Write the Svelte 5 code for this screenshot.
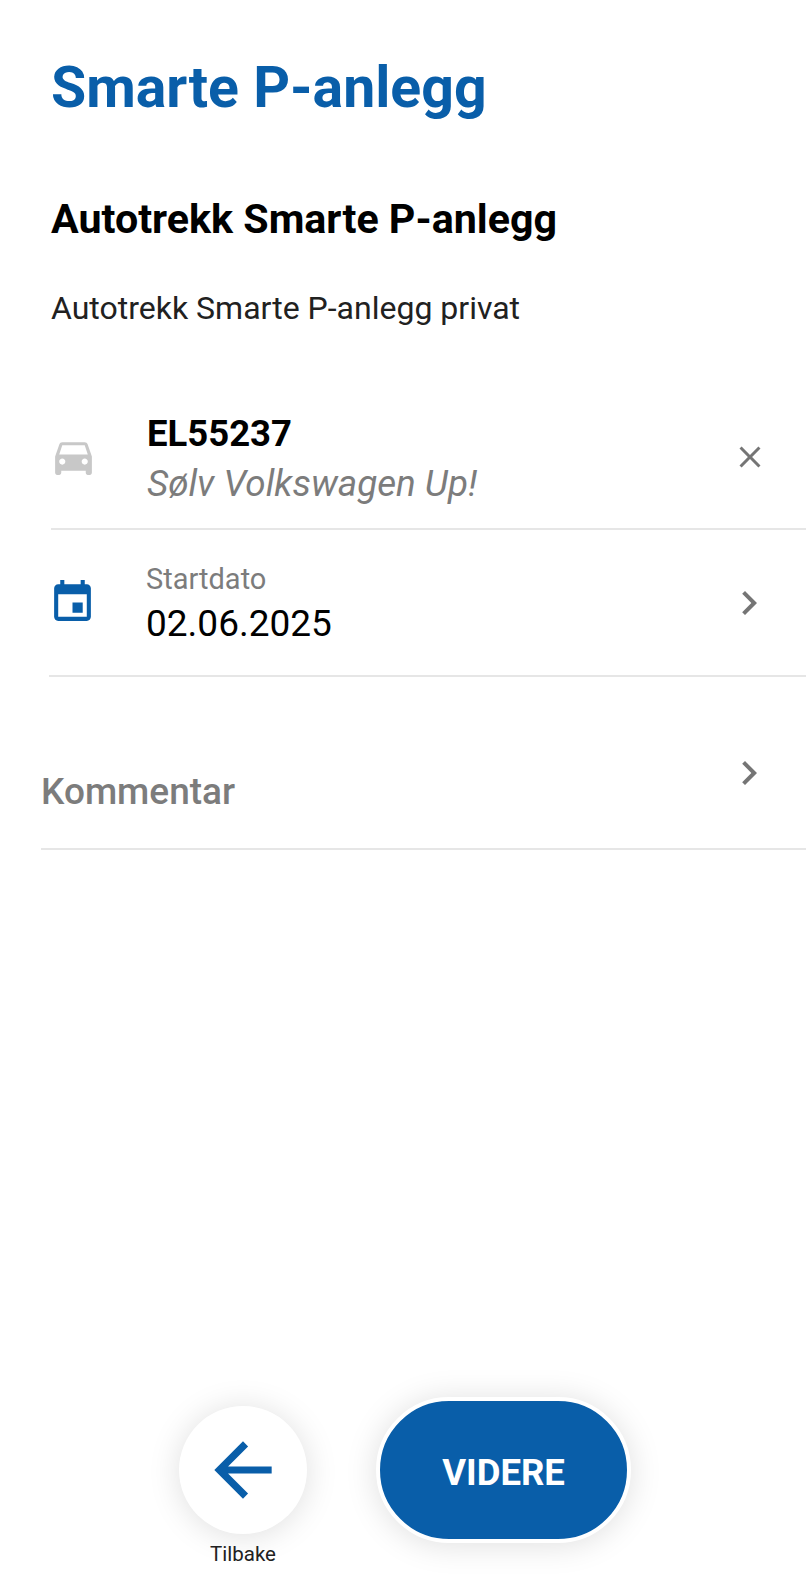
<script>
    const arrowBack = "M20 11H7.83l5.59-5.59L12 4l-8 8 8 8 1.41-1.41L7.83 13H20v-2z";
    const chevron = "M10 6L8.59 7.41 13.17 12l-4.58 4.59L10 18l6-6z";
    const close = "M19 6.41L17.59 5 12 10.59 6.41 5 5 6.41 10.59 12 5 17.59 6.41 19 12 13.41 17.59 19 19 17.59 13.41 12z";
    const car = "M18.92 6.01C18.72 5.42 18.16 5 17.5 5h-11c-.66 0-1.21.42-1.42 1.01L3 12v8c0 .55.45 1 1 1h1c.55 0 1-.45 1-1v-1h12v1c0 .55.45 1 1 1h1c.55 0 1-.45 1-1v-8l-2.08-5.99zM6.5 16c-.83 0-1.5-.67-1.5-1.5S5.67 13 6.5 13s1.5.67 1.5 1.5S7.33 16 6.5 16zm11 0c-.83 0-1.5-.67-1.5-1.5s.67-1.5 1.5-1.5 1.5.67 1.5 1.5-.67 1.5-1.5 1.5zM5 11l1.5-4.5h11L19 11H5z";
    const calendar = "M17 12h-5v5h5v-5zM16 1v2H8V1H6v2H5c-1.11 0-1.99.9-1.99 2L3 19c0 1.1.89 2 2 2h14c1.1 0 2-.9 2-2V5c0-1.1-.9-2-2-2h-1V1h-2zm3 18H5V8h14v11z";
</script>

<div class="page">
    <h1 class="title">Smarte P-anlegg</h1>
    <h2 class="subtitle">Autotrekk Smarte P-anlegg</h2>
    <p class="desc">Autotrekk Smarte P-anlegg privat</p>

    <div class="row vehicle">
        <svg class="lead" viewBox="0 0 24 24"><path fill="#c8c8c8" d={car}/></svg>
        <div class="text">
            <div class="plate">EL55237</div>
            <div class="model">Sølv Volkswagen Up!</div>
        </div>
        <svg class="close" viewBox="0 0 24 24"><path fill="#757575" d={close}/></svg>
    </div>

    <div class="row date">
        <svg class="lead" viewBox="0 0 24 24"><path fill="#095ea9" d={calendar}/></svg>
        <div class="text">
            <div class="label">Startdato</div>
            <div class="value">02.06.2025</div>
        </div>
        <svg class="chevron" viewBox="0 0 24 24"><path fill="#757575" d={chevron}/></svg>
    </div>

    <div class="row comment">
        <div class="commentText">Kommentar</div>
        <svg class="chevron" viewBox="0 0 24 24"><path fill="#757575" d={chevron}/></svg>
    </div>

    <div class="actions">
        <div class="back">
            <button class="backBtn" aria-label="Tilbake">
                <svg viewBox="0 0 24 24"><path fill="#095ea9" d={arrowBack}/></svg>
            </button>
            <span class="backLabel">Tilbake</span>
        </div>
        <button class="next">VIDERE</button>
    </div>
</div>

<style>
    :global(body) {
        background: #fff;
    }

    .page {
        display: flex;
        flex-direction: column;
        height: 1592px;
        overflow: hidden;
        box-sizing: border-box;
        font-family: Roboto, sans-serif;
        background: #fff;
    }

    .title {
        margin: 56px 0 0 51px;
        font-size: 57.2px;
        line-height: 64px;
        font-weight: 700;
        color: #095ea9;
    }

    .subtitle {
        margin: 75px 0 0 51px;
        font-size: 41.2px;
        line-height: 48px;
        font-weight: 700;
        color: #000;
    }

    .desc {
        margin: 45px 0 0 51px;
        font-size: 32px;
        line-height: 40px;
        color: #212121;
    }

    .row {
        display: flex;
        align-items: center;
        box-sizing: border-box;
        border-bottom: 2px solid #e6e6e6;
    }

    .vehicle {
        margin: 64px 0 0 51px;
        height: 138px;
    }

    .date {
        margin-left: 49px;
        height: 147px;
    }

    .comment {
        margin: 0 0 0 41px;
        height: 173px;
        padding-top: 72px;
        align-items: flex-start;
    }

    .lead {
        width: 49px;
        height: 49px;
        flex: none;
    }

    .vehicle .lead {
        margin: 0 49px 8px -2px;
    }

    .date .lead {
        margin: 0 49px 0 -1px;
    }

    .text {
        flex: 1;
    }

    .date .text {
        padding-top: 4px;
    }

    .plate {
        font-size: 36.5px;
        line-height: 46px;
        font-weight: 700;
        color: #000;
    }

    .model {
        margin-top: 2px;
        font-size: 36.8px;
        line-height: 50px;
        font-style: italic;
        color: #7c7c7c;
    }

    .label {
        font-size: 29px;
        line-height: 38px;
        color: #7c7c7c;
    }

    .value {
        margin-top: 1px;
        font-size: 37px;
        line-height: 50px;
        color: #000;
    }

    .close {
        width: 36px;
        height: 36px;
        margin: 0 38px 6px 0;
    }

    .chevron {
        width: 48px;
        height: 48px;
        margin-right: 33px;
    }

    .commentText {
        flex: 1;
        font-size: 37px;
        line-height: 44px;
        font-weight: 500;
        color: #7c7c7c;
        margin-top: 21px;
    }

    .actions {
        margin-top: auto;
        margin-bottom: 26px;
        margin-left: 179px;
        display: flex;
        align-items: flex-start;
        gap: 69px;
    }

    .back {
        display: flex;
        flex-direction: column;
        align-items: center;
        margin-top: 9px;
    }

    .backBtn {
        width: 128px;
        height: 128px;
        padding: 0;
        border: none;
        border-radius: 50%;
        background: #fff;
        box-shadow: 0 2px 32px rgba(0, 0, 0, 0.13);
        display: flex;
        align-items: center;
        justify-content: center;
    }

    .backBtn svg {
        width: 86px;
        height: 86px;
    }

    .backLabel {
        margin-top: 8px;
        font-size: 20.5px;
        line-height: 24px;
        color: #212121;
    }

    .next {
        width: 255px;
        height: 146px;
        box-sizing: border-box;
        border: 4px solid #fff;
        border-radius: 73px;
        background: #095ea9;
        color: #fff;
        font-family: Roboto, sans-serif;
        font-size: 36.5px;
        font-weight: 700;
        padding-top: 5px;
        box-shadow: 0 2px 32px rgba(0, 0, 0, 0.13);
    }
</style>
